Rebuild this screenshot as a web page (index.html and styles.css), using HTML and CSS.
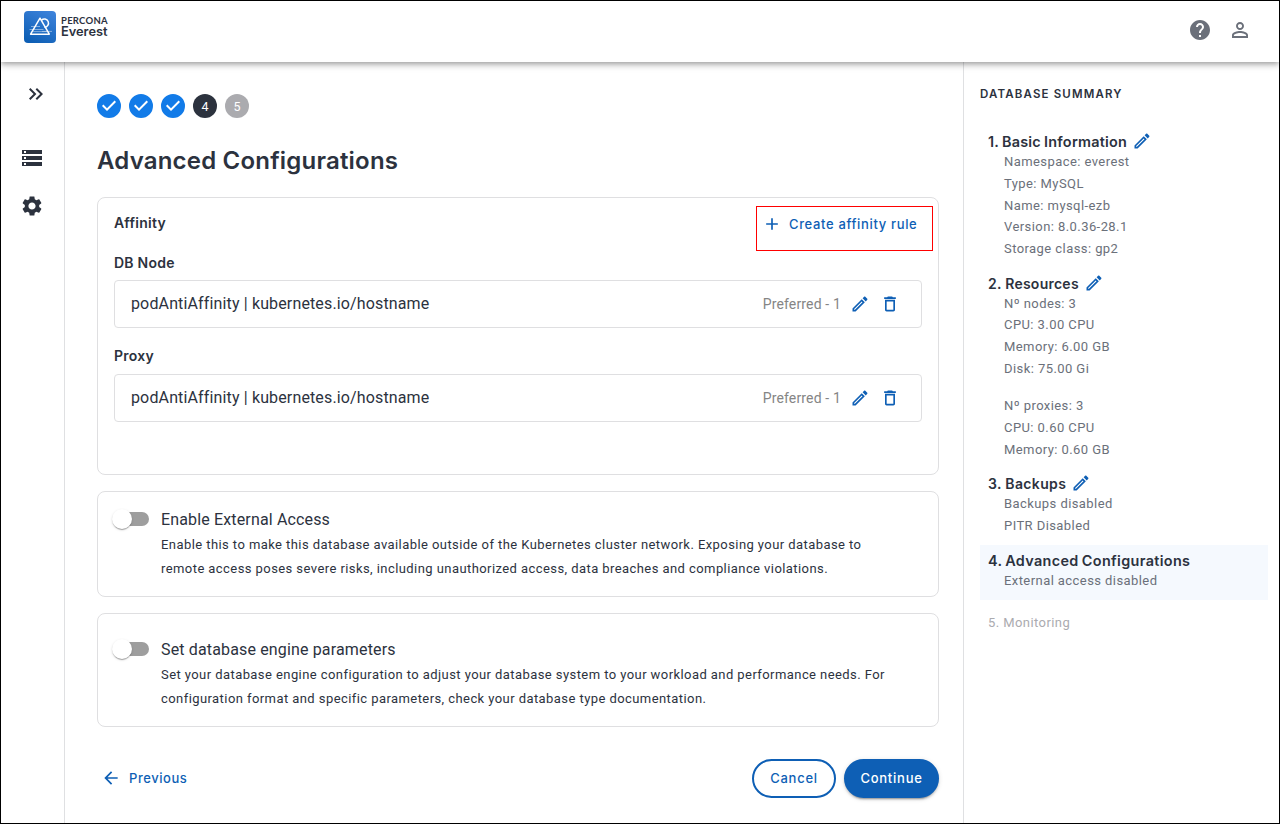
FILE: index.html
```html
<!DOCTYPE html>
<html lang="en">
<head>
<meta charset="utf-8">
<title>Percona Everest</title>
<link rel="stylesheet" href="styles.css">
</head>
<body>
<svg class="sprite" aria-hidden="true">
  <symbol id="check" viewBox="0 0 24 24"><path d="M12 0a12 12 0 1 0 0 24 12 12 0 0 0 0-24zm-2 17l-5-5 1.4-1.4 3.6 3.6 7.6-7.6L19 8l-9 9z"/></symbol>
  <symbol id="edit" viewBox="0 0 24 24"><path d="m14.06 9.02.92.92L5.92 19H5v-.92l9.06-9.06M17.66 3c-.25 0-.51.1-.7.29l-1.83 1.83 3.75 3.75 1.83-1.83c.39-.39.39-1.02 0-1.41l-2.34-2.34c-.2-.2-.45-.29-.71-.29zm-3.6 3.19L3 17.25V21h3.75L17.81 9.94l-3.75-3.75z"/></symbol>
  <symbol id="delete" viewBox="0 0 24 24"><path d="M6 19c0 1.1.9 2 2 2h8c1.1 0 2-.9 2-2V7H6v12zM8 9h8v10H8V9zm7.5-5-1-1h-5l-1 1H5v2h14V4h-3.5z"/></symbol>
</svg>
<div class="app">
  <header class="topbar">
    <div class="brand">
      <svg class="logo" width="32" height="32" viewBox="0 0 32 32">
        <defs><linearGradient id="lg" x1="0.8" y1="0" x2="0.3" y2="1"><stop offset="0" stop-color="#3c82da"/><stop offset="1" stop-color="#0e5fb5"/></linearGradient></defs>
        <rect width="32" height="32" rx="4" fill="url(#lg)"/>
        <g fill="none" stroke="#fff" stroke-width="1.5" stroke-linejoin="round">
          <path d="M6.6 23.2 16 7.200 25.300 23.200Z"/>
          <path d="M17.500 9.200a4.100 4.100 0 1 1 3 7"/>
        </g>
        <g stroke="#fff" stroke-width=".6" opacity=".75"><path d="M7 15.500h9M5.500 18.500h14M9 20.600h14M18 20.400h10"/></g>
      </svg>
      <div class="brand-text"><span class="brand-top">PERCONA</span><span class="brand-name">Everest</span></div>
    </div>
    <div class="top-icons">
      <svg class="icon24" viewBox="0 0 24 24"><path d="M12 2C6.48 2 2 6.48 2 12s4.480 10 10 10 10-4.480 10-10S17.520 2 12 2zm1 17h-2v-2h2v2zm2.070-7.750-.9.920C13.450 12.900 13 13.500 13 15h-2v-.5c0-1.100.450-2.100 1.170-2.830l1.240-1.260c.370-.360.590-.860.590-1.410 0-1.100-.9-2-2-2s-2 .9-2 2H8c0-2.210 1.790-4 4-4s4 1.790 4 4c0 .880-.360 1.680-.930 2.250z"/></svg>
      <svg class="icon24" viewBox="0 0 24 24"><path d="M12 5.900c1.160 0 2.100.940 2.100 2.100s-.940 2.100-2.100 2.100S9.900 9.160 9.900 8s.940-2.100 2.100-2.100m0 9c2.970 0 6.100 1.460 6.100 2.100v1.100H5.900V17c0-.640 3.130-2.100 6.100-2.100M12 4C9.790 4 8 5.790 8 8s1.790 4 4 4 4-1.790 4-4-1.790-4-4-4zm0 9c-2.670 0-8 1.340-8 4v3h16v-3c0-2.660-5.330-4-8-4z"/></svg>
    </div>
  </header>
  <div class="body">
    <nav class="rail">
      <svg class="icon24 expand" viewBox="0 0 24 24"><path d="M6.410 6 5 7.410 9.580 12 5 16.590 6.410 18l6-6z"/><path d="m13 6-1.410 1.410L16.170 12l-4.580 4.590L13 18l6-6z"/></svg>
      <svg class="icon24" viewBox="0 0 24 24"><path d="M2 20h20v-4H2v4zm2-3h2v2H4v-2zM2 4v4h20V4H2zm4 3H4V5h2v2zm-4 7h20v-4H2v4zm2-3h2v2H4v-2z"/></svg>
      <svg class="icon24" viewBox="0 0 24 24"><path d="M19.140 12.940c.040-.3.060-.610.060-.940 0-.320-.020-.640-.070-.940l2.030-1.580c.180-.140.230-.410.120-.610l-1.920-3.320c-.120-.220-.370-.290-.590-.220l-2.390.960c-.5-.380-1.030-.7-1.620-.940l-.360-2.540c-.040-.240-.240-.410-.480-.410h-3.840c-.240 0-.430.170-.470.410l-.360 2.540c-.590.240-1.130.570-1.620.940l-2.390-.960c-.220-.080-.470 0-.590.220L2.740 8.870c-.120.210-.080.470.120.610l2.030 1.580c-.050.3-.090.630-.090.940s.020.640.070.940l-2.030 1.580c-.180.140-.230.410-.120.610l1.920 3.320c.120.220.370.290.590.220l2.390-.960c.5.380 1.030.7 1.620.940l.360 2.540c.050.240.240.410.480.410h3.840c.240 0 .440-.170.470-.410l.360-2.540c.590-.240 1.130-.560 1.620-.940l2.390.960c.220.080.470 0 .590-.220l1.920-3.320c.120-.220.070-.470-.120-.610l-2.010-1.580zM12 15.600c-1.980 0-3.600-1.620-3.600-3.600s1.620-3.600 3.600-3.600 3.600 1.620 3.600 3.600-1.620 3.600-3.600 3.600z"/></svg>
    </nav>
    <main class="main">
      <div class="steps">
        <svg class="step-done"><use href="#check"/></svg>
        <svg class="step-done"><use href="#check"/></svg>
        <svg class="step-done"><use href="#check"/></svg>
        <span class="step active">4</span>
        <span class="step">5</span>
      </div>
      <h1 class="title">Advanced Configurations</h1>
      <section class="card affinity">
        <div class="card-head">
          <h2 class="card-title">Affinity</h2>
          <div class="create">
            <svg class="icon20" viewBox="0 0 24 24"><path d="M19 13h-6v6h-2v-6H5v-2h6V5h2v6h6v2z"/></svg>
            <span class="create-label">Create affinity rule</span>
          </div>
        </div>
        <h3 class="group db">DB Node</h3>
        <div class="rule">
          <span class="rule-name">podAntiAffinity | kubernetes.io/hostname</span>
          <span class="pref">Preferred - 1</span>
          <svg class="icon20"><use href="#edit"/></svg>
          <svg class="icon20 trash"><use href="#delete"/></svg>
        </div>
        <h3 class="group proxy">Proxy</h3>
        <div class="rule">
          <span class="rule-name">podAntiAffinity | kubernetes.io/hostname</span>
          <span class="pref">Preferred - 1</span>
          <svg class="icon20"><use href="#edit"/></svg>
          <svg class="icon20 trash"><use href="#delete"/></svg>
        </div>
      </section>
      <section class="card option">
        <span class="switch"></span>
        <div>
          <div class="opt-title">Enable External Access</div>
          <p class="opt-text">Enable this to make this database available outside of the Kubernetes cluster network. Exposing your database to<br>remote access poses severe risks, including unauthorized access, data breaches and compliance violations.</p>
        </div>
      </section>
      <section class="card option engine">
        <span class="switch"></span>
        <div>
          <div class="opt-title">Set database engine parameters</div>
          <p class="opt-text">Set your database engine configuration to adjust your database system to your workload and performance needs. For<br>configuration format and specific parameters, check your database type documentation.</p>
        </div>
      </section>
      <div class="actions">
        <div class="prev">
          <svg class="icon20" viewBox="0 0 24 24"><path d="M20 11H7.830l5.590-5.590L12 4l-8 8 8 8 1.410-1.410L7.830 13H20v-2z"/></svg>
          <span class="btn-label prev-label">Previous</span>
        </div>
        <button class="btn cancel"><span class="btn-label">Cancel</span></button>
        <button class="btn continue"><span class="btn-label">Continue</span></button>
      </div>
    </main>
    <aside class="summary">
      <h2 class="sum-head">DATABASE SUMMARY</h2>
      <section class="sec">
        <h3 class="sec-title s1"><span>1. Basic Information</span><svg class="icon20"><use href="#edit"/></svg></h3>
        <ul class="lines"><li>Namespace: everest</li><li>Type: MySQL</li><li>Name: mysql-ezb</li><li>Version: 8.0.36-28.1</li><li>Storage class: gp2</li></ul>
      </section>
      <section class="sec">
        <h3 class="sec-title s2"><span>2. Resources</span><svg class="icon20"><use href="#edit"/></svg></h3>
        <ul class="lines"><li>Nº nodes: 3</li><li>CPU: 3.00 CPU</li><li>Memory: 6.00 GB</li><li>Disk: 75.00 Gi</li></ul>
        <ul class="lines second"><li>Nº proxies: 3</li><li>CPU: 0.60 CPU</li><li>Memory: 0.60 GB</li></ul>
      </section>
      <section class="sec">
        <h3 class="sec-title s3"><span>3. Backups</span><svg class="icon20"><use href="#edit"/></svg></h3>
        <ul class="lines"><li>Backups disabled</li><li>PITR Disabled</li></ul>
      </section>
      <section class="sec current">
        <h3 class="sec-title s4"><span>4. Advanced Configurations</span></h3>
        <ul class="lines"><li>External access disabled</li></ul>
      </section>
      <div class="pending">5. Monitoring</div>
    </aside>
  </div>
</div>
</body>
</html>
```

FILE: styles.css
```css
* { box-sizing: border-box; }
body { margin: 0; background: #fff; color: #2c323e; font-family: Roboto, sans-serif; }
h1, h2, h3, p, ul { margin: 0; padding: 0; }
ul { list-style: none; }
svg { display: block; flex: none; }
.sprite { display: none; }
.app { width: 1280px; height: 824px; border: 1px solid #000; display: flex; flex-direction: column; overflow: hidden; }
.icon24 { width: 24px; height: 24px; fill: currentColor; }
.icon20 { width: 20px; height: 20px; fill: #0e5fb5; }

.topbar { height: 61px; flex: none; display: flex; justify-content: space-between; padding: 10px 27px 0 23px; z-index: 1; background: #fff;
  box-shadow: 0 2px 4px -1px rgba(0,0,0,.2), 0 4px 5px 0 rgba(0,0,0,.14), 0 1px 10px 0 rgba(0,0,0,.12); }
.brand { display: flex; gap: 5px; }
.brand-text { display: flex; flex-direction: column; padding-top: 5px; font-family: Lato, sans-serif; white-space: nowrap; }
.brand-top { font-size: 9.5px; line-height: 10px; font-weight: 700; letter-spacing: .25px; }
.brand-name { font-family: Inter, sans-serif; font-size: 12.8px; line-height: 12px; font-weight: 600; }
.top-icons { display: flex; gap: 16px; padding-top: 7px; color: #6b707a; }

.body { flex: 1; display: flex; }
.rail { width: 64px; border-right: 1px solid #dfe0e2; display: flex; flex-direction: column; gap: 24px; padding: 20px 0 0 19px; }
.expand { margin: 0 0 16px 4px; }
.main { width: 898px; padding: 32px 24px 0 32px; }
.steps { display: flex; gap: 8px; height: 24px; }
.step-done { width: 24px; height: 24px; fill: #127be8; }
.step { width: 24px; height: 24px; border-radius: 50%; background: #ababaf; color: #fff; font-size: 12.5px; line-height: 25px; text-align: center; }
.step.active { background: #2c323e; }
.title { font-family: Inter, sans-serif; font-weight: 600; font-size: 24px; line-height: 32px; height: 32px; margin: 27px 0 20px; letter-spacing: .2px; white-space: nowrap; }

.card { width: 842px; border: 1px solid #dfdfe1; border-radius: 8px; margin-bottom: 16px; }
.affinity { height: 278px; padding: 8px 16px 0; }
.card-head { display: flex; justify-content: space-between; height: 45px; }
.card-title, .group { font-family: Inter, sans-serif; font-size: 14px; font-weight: 600; line-height: 20px; letter-spacing: .25px; }
.card-title { padding-top: 7px; }
.create { width: 177px; height: 45px; margin-right: -11px; border: 1px solid #f00; display: flex; gap: 7px; padding: 7px 0 0 5px; }
.create-label, .btn-label { font-family: Inter, sans-serif; font-size: 13px; font-weight: 500; line-height: 20px; color: #0e5fb5; letter-spacing: .65px; white-space: nowrap; }
.db { margin: 2px 0 7px; }
.proxy { margin: 18px 0 8px; }
.rule { width: 808px; height: 48px; border: 1px solid #dfdfe1; border-radius: 4px; display: flex; align-items: center; gap: 9px; padding: 0 21px 0 16px; }
.rule-name { flex: 1; font-size: 16px; line-height: 20px; letter-spacing: .14px; }
.pref { font-size: 14px; color: #858585; letter-spacing: .15px; }
.trash { margin-left: 1px; }

.option { display: flex; height: 106px; padding: 16px 15px; }
.option > div { padding-left: 12px; }
.engine { height: 114px; padding-top: 24px; }
.switch { flex: none; width: 36px; height: 24px; position: relative; }
.switch::before { content: ""; position: absolute; left: 2px; top: 4px; width: 34px; height: 14px; border-radius: 7px; background: #9e9e9e; }
.switch::after { content: ""; position: absolute; left: -1px; top: 1px; width: 20px; height: 20px; border-radius: 50%; background: #fff;
  box-shadow: 0 2px 1px -1px rgba(0,0,0,.2), 0 1px 1px 0 rgba(0,0,0,.14), 0 1px 3px 0 rgba(0,0,0,.12); }
.opt-title { font-size: 16px; line-height: 24px; letter-spacing: .15px; }
.opt-text { padding-top: 1px; font-size: 13px; line-height: 24px; letter-spacing: .427px; white-space: nowrap; }

.actions { display: flex; align-items: center; margin-top: 32px; width: 842px; height: 39px; gap: 8px; }
.prev { flex: 1; display: flex; gap: 8px; padding-left: 4px; margin-top: -1px; }
.prev-label { letter-spacing: .55px; }
.btn { height: 39px; border: 2px solid #0e5fb5; border-radius: 20px; background: #fff; padding: 0 0 2px; }
.btn .btn-label { letter-spacing: .75px; }
.cancel { width: 84px; }
.continue { width: 95px; background: #0e5fb5; box-shadow: 0 3px 1px -2px rgba(0,0,0,.2), 0 2px 2px 0 rgba(0,0,0,.14), 0 1px 5px 0 rgba(0,0,0,.12); }
.continue .btn-label { color: #fff; }

.summary { width: 316px; border-left: 1px solid #dfe0e2; padding: 22px 11px 0 16px; }
.sum-head { font-family: Inter, sans-serif; font-size: 11.5px; font-weight: 600; line-height: 20px; letter-spacing: 1.15px; margin-bottom: 22.2px; white-space: nowrap; }
.sec { padding: 7px 0 8px 8px; }
.sec-title { display: flex; align-items: center; gap: 5px; height: 18px; font-family: Inter, sans-serif; font-size: 14px; font-weight: 600; line-height: 18px; letter-spacing: .25px; white-space: nowrap; }
.s1 { font-size: 14.4px; letter-spacing: .25px; word-spacing: -.8px; }
.s3 { letter-spacing: .35px; }
.s4 { font-size: 14.4px; letter-spacing: .35px; word-spacing: -.8px; }
.sec-title .icon20 { margin-top: -2px; }
.lines { padding-left: 16px; font-size: 13px; line-height: 21.67px; letter-spacing: .427px; color: #6b707a; }
.second { padding-top: 16px; }
.current { background: #f5f9fe; padding-top: 7.3px; padding-bottom: 8.4px; }
.pending { padding: 12px 0 0 8px; font-size: 13px; line-height: 22px; letter-spacing: .427px; color: #ababaf; }
```
